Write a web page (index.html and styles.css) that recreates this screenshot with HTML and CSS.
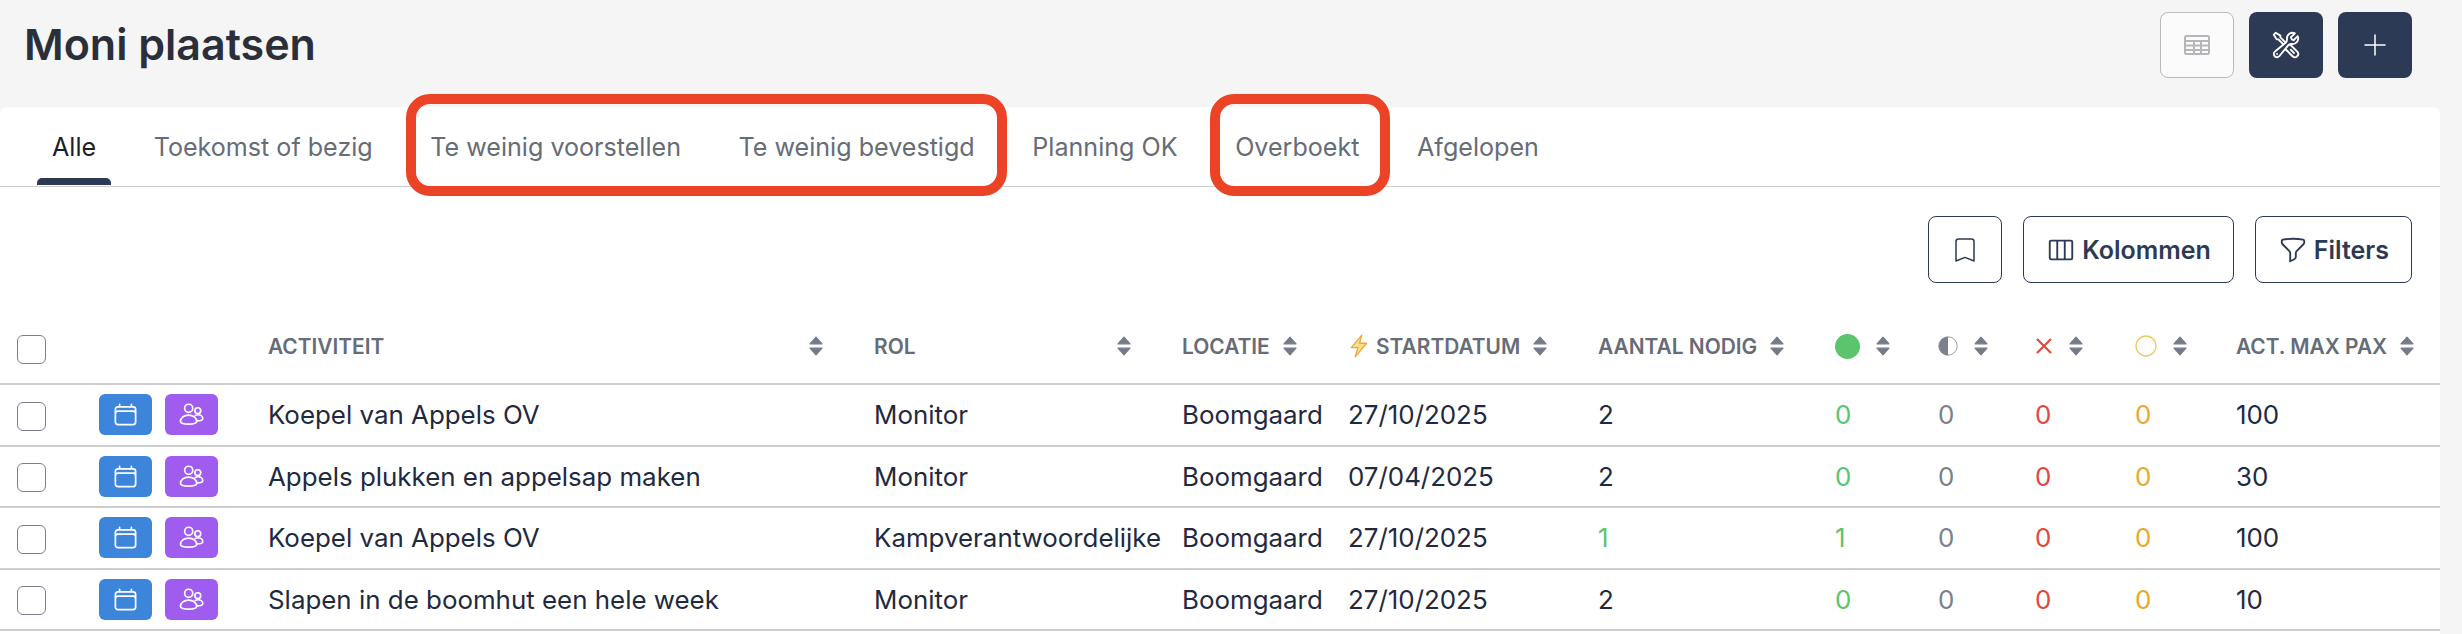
FILE: index.html
```html
<!DOCTYPE html>
<html>

<head>
    <title>Moni plaatsen</title>
    <meta charset="utf-8" />
    <link rel="stylesheet" href="styles.css">
</head>

<body>

    <svg class="defs" width="0" height="0">
        <symbol id="i-calendar" viewBox="0 0 24 24">
            <path d="M6.75 3v2.25M17.25 3v2.25M3 18.75V7.5a2.25 2.25 0 0 1 2.25-2.25h13.5A2.25 2.25 0 0 1 21 7.5v11.25m-18 0A2.25 2.25 0 0 0 5.25 21h13.5A2.25 2.25 0 0 0 21 18.75m-18 0v-7.5A2.25 2.25 0 0 1 5.25 9h13.5A2.25 2.25 0 0 1 21 11.25v7.5" />
        </symbol>
        <symbol id="i-users" viewBox="0 0 24 24">
            <circle cx="9.5" cy="6.5" r="3.6" />
            <circle cx="17.6" cy="8.6" r="2.6" />
            <path d="M2.2 18.2c0-3.4 3.2-5.6 7.2-5.6s7.2 2.2 7.2 5.6c0 1.4-3.4 2.3-7.2 2.3s-7.2-.9-7.2-2.3Z" />
            <path d="M15.2 13c.7-.5 1.6-.8 2.6-.8 2.4 0 4.2 1.5 4.2 3.6 0 1.3-2 1.9-5.2 1.9" />
        </symbol>
        <symbol id="i-sort" viewBox="0 0 14 20">
            <path d="M7 1.2 13 7.8H1ZM7 18.8 1 12.2H13Z" stroke="#747a87" stroke-width="1.2" stroke-linejoin="round" />
        </symbol>
    </svg>

    <div class="pageHead">
        <h1 class="pageTitle">Moni plaatsen</h1>
        <div class="pageActions">
            <button class="headBtn headBtnLight">
                <svg width="26" height="20" viewBox="0 0 26 20" fill="none" stroke="#b4b6ba" stroke-width="2">
                    <rect x="1" y="1" width="24" height="18" rx="1.5" />
                    <path d="M1 6h24M1 10.5h24M1 15h24M10 6v13M17 6v13" />
                </svg>
            </button>
            <button class="headBtn">
                <svg class="line" width="30" height="30" viewBox="0 0 24 24" stroke-width="1.7">
                    <path d="M11.42 15.17 17.25 21A2.652 2.652 0 0 0 21 17.25l-5.877-5.877M11.42 15.17l2.496-3.03c.317-.384.74-.626 1.208-.766M11.42 15.17l-4.655 5.653a2.548 2.548 0 1 1-3.586-3.586l6.837-5.63m5.108-.233c.55-.164 1.163-.188 1.743-.14a4.5 4.5 0 0 0 4.486-6.336l-3.276 3.277a3.004 3.004 0 0 1-2.25-2.25l3.276-3.276a4.5 4.5 0 0 0-6.336 4.486c.091 1.076-.071 2.264-.904 2.95l-.102.085m-1.745 1.437L5.909 7.5H4.5L2.25 3.75l1.5-1.5L7.5 4.5v1.409l4.26 4.26m-1.745 1.437 1.745-1.437m6.615 8.206L15.75 15.75M4.867 19.125h.008v.008h-.008v-.008Z" />
                </svg>
            </button>
            <button class="headBtn">
                <svg class="line" width="22" height="22" viewBox="0 0 22 22" stroke-width="1.6">
                    <path d="M11 1v20M1 11h20" />
                </svg>
            </button>
        </div>
    </div>

    <div class="card">
        <div class="tabs">
            <a class="tab tabActive">Alle</a>
            <a class="tab">Toekomst of bezig</a>
            <a class="tab">Te weinig voorstellen</a>
            <a class="tab">Te weinig bevestigd</a>
            <a class="tab">Planning OK</a>
            <a class="tab">Overboekt</a>
            <a class="tab">Afgelopen</a>
        </div>

        <div class="mark markWide"></div>
        <div class="mark markSmall"></div>

        <div class="toolbar">
            <button class="toolBtn toolBtnIcon">
                <svg class="line" width="24" height="26" viewBox="0 0 24 26">
                    <path d="M3 4.5C3 3 4 2 5.5 2h13C20 2 21 3 21 4.5V24l-9-3.6L3 24Z" />
                </svg>
            </button>
            <button class="toolBtn">
                <svg class="line" width="30" height="30" viewBox="0 0 24 24">
                    <path d="M9 4.5v15m6-15v15m-10.875 0h15.75c.621 0 1.125-.504 1.125-1.125V5.625c0-.621-.504-1.125-1.125-1.125H4.125C3.504 4.5 3 5.004 3 5.625v12.75c0 .621.504 1.125 1.125 1.125Z" />
                </svg>
                Kolommen
            </button>
            <button class="toolBtn">
                <svg class="line" width="30" height="30" viewBox="0 0 24 24">
                    <path d="M12 3c2.755 0 5.455.232 8.083.678.533.09.917.556.917 1.096v1.044a2.25 2.25 0 0 1-.659 1.591l-5.432 5.432a2.25 2.25 0 0 0-.659 1.591v2.927a2.25 2.25 0 0 1-1.244 2.013L9.75 21v-6.568a2.25 2.25 0 0 0-.659-1.591L3.659 7.409A2.25 2.25 0 0 1 3 5.818V4.774c0-.54.384-1.006.917-1.096A48.32 48.32 0 0 1 12 3Z" />
                </svg>
                Filters
            </button>
        </div>

        <table class="grid">
            <colgroup>
                <col class="colCheck">
                <col class="colActions">
                <col class="colActivity">
                <col class="colRole">
                <col class="colPlace">
                <col class="colDate">
                <col class="colNeeded">
                <col class="colGreen">
                <col class="colHalf">
                <col class="colCross">
                <col class="colOpen">
                <col>
            </colgroup>
            <thead>
                <tr>
                    <th><span class="check checkHead"></span></th>
                    <th></th>
                    <th><div class="thInner thSpread">ACTIVITEIT <svg class="sort"><use href="#i-sort" /></svg></div></th>
                    <th><div class="thInner thSpread">ROL <svg class="sort"><use href="#i-sort" /></svg></div></th>
                    <th><div class="thInner">LOCATIE <svg class="sort"><use href="#i-sort" /></svg></div></th>
                    <th>
                        <div class="thInner">
                            <span class="dateLabel">
                                <svg width="22" height="24" viewBox="0 0 20 22">
                                    <path d="M12.5 1 3 12.5h6L6.5 21 17 8.5h-6.5Z" fill="#fde08a" stroke="#f0a63c" stroke-width="1.2" stroke-linejoin="round" />
                                </svg>
                                STARTDATUM
                            </span>
                            <svg class="sort"><use href="#i-sort" /></svg>
                        </div>
                    </th>
                    <th><div class="thInner">AANTAL NODIG <svg class="sort"><use href="#i-sort" /></svg></div></th>
                    <th>
                        <div class="thInner thStatus">
                            <svg width="25" height="25" viewBox="0 0 25 25"><circle cx="12.5" cy="12.5" r="12.5" fill="#5cc46c" /></svg>
                            <svg class="sort"><use href="#i-sort" /></svg>
                        </div>
                    </th>
                    <th>
                        <div class="thInner thStatus">
                            <svg width="20" height="20" viewBox="0 0 20 20">
                                <circle cx="10" cy="10" r="9.2" fill="#fff" stroke="#7b808c" stroke-width="0.8" />
                                <path d="M10 .8a9.2 9.2 0 0 0 0 18.4Z" fill="#7b808c" />
                            </svg>
                            <svg class="sort"><use href="#i-sort" /></svg>
                        </div>
                    </th>
                    <th>
                        <div class="thInner thStatus">
                            <svg width="18" height="18" viewBox="0 0 18 18"><path d="M2 2l14 14M16 2 2 16" stroke="#e2483d" stroke-width="2.2" fill="none" /></svg>
                            <svg class="sort"><use href="#i-sort" /></svg>
                        </div>
                    </th>
                    <th>
                        <div class="thInner thStatus">
                            <svg width="22" height="22" viewBox="0 0 22 22"><circle cx="11" cy="11" r="10" fill="none" stroke="#efc65f" stroke-width="1.3" /></svg>
                            <svg class="sort"><use href="#i-sort" /></svg>
                        </div>
                    </th>
                    <th><div class="thInner">ACT. MAX PAX <svg class="sort"><use href="#i-sort" /></svg></div></th>
                </tr>
            </thead>
            <tbody>
                <tr>
                    <td><span class="check"></span></td>
                    <td>
                        <div class="rowBtns">
                            <a class="rowBtn rowBtnBlue"><svg class="line" width="27" height="27"><use href="#i-calendar" /></svg></a>
                            <a class="rowBtn rowBtnPurple"><svg class="line" width="27" height="27"><use href="#i-users" /></svg></a>
                        </div>
                    </td>
                    <td>Koepel van Appels OV</td>
                    <td>Monitor</td>
                    <td>Boomgaard</td>
                    <td>27/10/2025</td>
                    <td>2</td>
                    <td class="numGreen">0</td>
                    <td class="numGrey">0</td>
                    <td class="numRed">0</td>
                    <td class="numYellow">0</td>
                    <td>100</td>
                </tr>
                <tr>
                    <td><span class="check"></span></td>
                    <td>
                        <div class="rowBtns">
                            <a class="rowBtn rowBtnBlue"><svg class="line" width="27" height="27"><use href="#i-calendar" /></svg></a>
                            <a class="rowBtn rowBtnPurple"><svg class="line" width="27" height="27"><use href="#i-users" /></svg></a>
                        </div>
                    </td>
                    <td>Appels plukken en appelsap maken</td>
                    <td>Monitor</td>
                    <td>Boomgaard</td>
                    <td>07/04/2025</td>
                    <td>2</td>
                    <td class="numGreen">0</td>
                    <td class="numGrey">0</td>
                    <td class="numRed">0</td>
                    <td class="numYellow">0</td>
                    <td>30</td>
                </tr>
                <tr>
                    <td><span class="check"></span></td>
                    <td>
                        <div class="rowBtns">
                            <a class="rowBtn rowBtnBlue"><svg class="line" width="27" height="27"><use href="#i-calendar" /></svg></a>
                            <a class="rowBtn rowBtnPurple"><svg class="line" width="27" height="27"><use href="#i-users" /></svg></a>
                        </div>
                    </td>
                    <td>Koepel van Appels OV</td>
                    <td>Kampverantwoordelijke</td>
                    <td>Boomgaard</td>
                    <td>27/10/2025</td>
                    <td class="numGreen">1</td>
                    <td class="numGreen">1</td>
                    <td class="numGrey">0</td>
                    <td class="numRed">0</td>
                    <td class="numYellow">0</td>
                    <td>100</td>
                </tr>
                <tr>
                    <td><span class="check"></span></td>
                    <td>
                        <div class="rowBtns">
                            <a class="rowBtn rowBtnBlue"><svg class="line" width="27" height="27"><use href="#i-calendar" /></svg></a>
                            <a class="rowBtn rowBtnPurple"><svg class="line" width="27" height="27"><use href="#i-users" /></svg></a>
                        </div>
                    </td>
                    <td>Slapen in de boomhut een hele week</td>
                    <td>Monitor</td>
                    <td>Boomgaard</td>
                    <td>27/10/2025</td>
                    <td>2</td>
                    <td class="numGreen">0</td>
                    <td class="numGrey">0</td>
                    <td class="numRed">0</td>
                    <td class="numYellow">0</td>
                    <td>10</td>
                </tr>
            </tbody>
        </table>
    </div>

</body>

</html>
```

FILE: styles.css
```css
html,
body {
    margin: 0;
    height: 634px;
    overflow: hidden;
}

body {
    background-color: #f5f5f5;
    font-family: Inter, "Liberation Sans", sans-serif;
    color: #1f2a40;
}

.defs {
    display: block;
    height: 0;
}

button {
    font-family: inherit;
    cursor: pointer;
}

svg.line {
    fill: none;
    stroke: currentColor;
    stroke-width: 1.5;
    stroke-linecap: round;
    stroke-linejoin: round;
    flex: none;
}

/* page header */

.pageHead {
    height: 107px;
    box-sizing: border-box;
    display: flex;
    justify-content: space-between;
    padding: 12px 50px 0 24px;
}

.pageTitle {
    margin: 0;
    font-size: 43px;
    line-height: 64px;
    font-weight: 600;
    color: #2a2f3a;
}

.pageActions {
    display: flex;
    gap: 15px;
}

.headBtn {
    width: 74px;
    height: 66px;
    padding: 0;
    display: flex;
    align-items: center;
    justify-content: center;
    border: none;
    border-radius: 8px;
    background-color: #2d3a55;
    color: #fff;
}

.headBtnLight {
    background-color: #fbfbfb;
    border: 1.5px solid #b8babf;
}

/* card + tabs */

.card {
    position: relative;
    width: 2440px;
    height: 527px;
    background-color: #fff;
    border-radius: 6px 6px 0 0;
}

.tabs {
    height: 80px;
    box-sizing: border-box;
    display: flex;
    gap: 27.6px;
    padding-left: 37px;
    border-bottom: 1.5px solid #cdcdd0;
}

.tab {
    position: relative;
    padding: 0 15px;
    font-size: 25.1px;
    line-height: 80px;
    color: #666c78;
    white-space: nowrap;
}

.tabActive {
    color: #1a1f2b;
}

.tabActive::after {
    content: "";
    position: absolute;
    left: 0;
    right: 0;
    bottom: 1px;
    height: 7px;
    background-color: #2d3a55;
    border-radius: 5px 5px 0 0;
}

/* red marks drawn over the tabs */

.mark {
    position: absolute;
    top: -13px;
    height: 102px;
    box-sizing: border-box;
    border: 10px solid #ec4225;
    border-radius: 24px;
}

.markWide {
    left: 406px;
    width: 601px;
}

.markSmall {
    left: 1210px;
    width: 180px;
}

/* toolbar */

.toolbar {
    display: flex;
    justify-content: flex-end;
    gap: 21px;
    padding: 29px 28px 0 0;
}

.toolBtn {
    height: 67px;
    padding: 0 22px;
    display: flex;
    align-items: center;
    gap: 6px;
    background-color: #fff;
    border: 1.5px solid #2d3a55;
    border-radius: 8px;
    font-size: 25px;
    font-weight: 600;
    color: #2d3a55;
}

.toolBtnIcon {
    width: 74px;
    justify-content: center;
    padding: 0;
}

/* table */

.grid {
    width: 2440px;
    table-layout: fixed;
    border-collapse: collapse;
}

.colCheck {
    width: 99px;
}

.colActions {
    width: 169px;
}

.colActivity {
    width: 606px;
}

.colRole {
    width: 308px;
}

.colPlace {
    width: 166px;
}

.colDate {
    width: 250px;
}

.colNeeded {
    width: 237px;
}

.colGreen {
    width: 103px;
}

.colHalf {
    width: 97px;
}

.colCross {
    width: 100px;
}

.colOpen {
    width: 101px;
}

.grid th {
    height: 101px;
    box-sizing: border-box;
    padding: 26px 0 0 0;
    text-align: left;
    font-size: 20.9px;
    font-weight: 600;
    color: #666c78;
    border-bottom: 2px solid #cdcdd0;
    white-space: nowrap;
}

.grid td {
    height: 61.5px;
    box-sizing: border-box;
    padding: 0;
    font-size: 25.9px;
    color: #1f2a40;
    border-bottom: 2px solid #cdcdd0;
    white-space: nowrap;
}

.thInner {
    display: flex;
    align-items: center;
    gap: 13px;
}

.thSpread {
    justify-content: space-between;
    padding-right: 51px;
}

.thStatus {
    gap: 16px;
}

.dateLabel {
    display: flex;
    align-items: center;
    gap: 6px;
}

.sort {
    width: 14px;
    height: 20px;
    fill: #747a87;
    flex: none;
}

.check {
    display: block;
    width: 29px;
    height: 29px;
    margin: 3px 0 0 17px;
    box-sizing: border-box;
    border: 1.5px solid #7b808c;
    border-radius: 6px;
    background-color: #fff;
}

.checkHead {
    margin-top: 7px;
}

.rowBtns {
    display: flex;
    gap: 13px;
}

.rowBtn {
    width: 53px;
    height: 41px;
    display: flex;
    align-items: center;
    justify-content: center;
    border-radius: 6px;
    color: #fff;
}

.rowBtnBlue {
    background-color: #3d85db;
}

.rowBtnPurple {
    background-color: #a05bef;
}

.grid td.numGreen {
    color: #5cc46c;
}

.grid td.numGrey {
    color: #7b808c;
}

.grid td.numRed {
    color: #e2483d;
}

.grid td.numYellow {
    color: #e9a92d;
}
```
